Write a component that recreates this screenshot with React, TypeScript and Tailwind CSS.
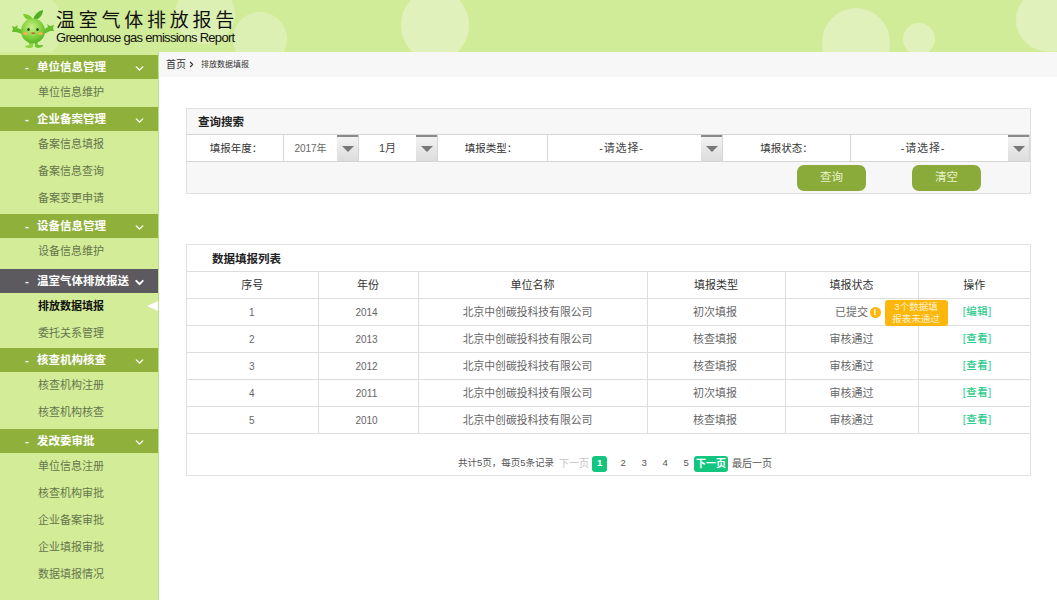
import { ChevronDown, ChevronRight } from "lucide-react";

const cjk = "font-['Liberation_Sans','Noto_Sans_CJK_SC',sans-serif]";

const groups = [
  { title: "单位信息管理", items: ["单位信息维护"], pb: "pb-[1px]" },
  { title: "企业备案管理", items: ["备案信息填报", "备案信息查询", "备案变更申请"], pb: "pb-[2px]" },
  { title: "设备信息管理", items: ["设备信息维护"], pb: "pb-[4px]" },
  { title: "温室气体排放报送", items: ["排放数据填报", "委托关系管理"], pb: "pb-[1px]", active: true },
  { title: "核查机构核查", items: ["核查机构注册", "核查机构核查"], pb: "pb-[3px]" },
  { title: "发改委审批", items: ["单位信息注册", "核查机构审批", "企业备案审批", "企业填报审批", "数据填报情况"], pb: "pb-[4px]" },
];

const rows = [
  ["1", "2014", "初次填报", "已提交", "[编辑]"],
  ["2", "2013", "核查填报", "审核通过", "[查看]"],
  ["3", "2012", "核查填报", "审核通过", "[查看]"],
  ["4", "2011", "初次填报", "审核通过", "[查看]"],
  ["5", "2010", "核查填报", "审核通过", "[查看]"],
];

function Mascot() {
  return (
    <svg width="46" height="40" viewBox="0 0 46 40" className="shrink-0">
      <defs>
        <radialGradient id="body" cx="45%" cy="35%" r="70%">
          <stop offset="0%" stopColor="#c8f08a" />
          <stop offset="60%" stopColor="#7fd038" />
          <stop offset="100%" stopColor="#4fae22" />
        </radialGradient>
      </defs>
      <path d="M24 11 C23 7 19 5 14 5 C15 9 19 12 24 11Z" fill="#7ccb2f" />
      <path d="M24 11 C25 6 29 2 34 1 C34 6 30 11 24 11Z" fill="#4fae22" />
      <path d="M14 21 L8 19 L9 16 L6 18 L3 17 L4 20 L3 23 L7 23 L13 25Z" fill="#67bf2c" />
      <path d="M34 21 L39 18 L38 15 L41 17 L45 16 L44 19 L45 22 L41 22 L35 25Z" fill="#67bf2c" />
      <path d="M20 32 L20 36 L16 37 Q16 39 22 39 L24 38 L24 33Z" fill="#8ed63f" />
      <path d="M28 32 L29 36 L34 36 Q35 38 29 39 L26 38 L26 33Z" fill="#6fc52f" />
      <ellipse cx="24" cy="22" rx="12" ry="12.5" fill="url(#body)" />
      <ellipse cx="19.5" cy="20.5" rx="1.2" ry="1.6" fill="#23400f" />
      <ellipse cx="28.5" cy="20.5" rx="1.2" ry="1.6" fill="#23400f" />
      <ellipse cx="16.5" cy="24.5" rx="2.5" ry="1.6" fill="#f5b04f" />
      <ellipse cx="31.5" cy="24.5" rx="2.5" ry="1.6" fill="#f5b04f" />
      <path d="M22 23.5 Q24 26.5 26.5 23.5Z" fill="#c9501e" />
    </svg>
  );
}

function Select({ w, value, extra }: { w: string; value: string; extra: string }) {
  return (
    <div className={`${w} flex h-full items-stretch border-r border-[#d5d5d5]`}>
      <div className={`flex-1 flex items-center justify-center pt-[1px] ${extra}`}>{value}</div>
      <div className="w-[21px] border-t-2 border-[#8a8a8a] bg-gradient-to-b from-[#f2f2f2] to-[#dcdcdc] flex items-center justify-center">
        <span className="block w-0 h-0 border-x-[6px] border-x-transparent border-t-[6px] border-t-[#777]" />
      </div>
    </div>
  );
}

function Label({ w, text, extra }: { w: string; text: string; extra?: string }) {
  return <div className={`${w} flex h-full items-center justify-center pt-[1px] border-r border-[#d5d5d5] text-[10.5px] text-[#333] ${extra ?? ""}`}>{text}</div>;
}

export default function App() {
  return (
    <div className={`${cjk} w-[1057px] h-[600px] overflow-hidden bg-white flex flex-col`}>
      <header className="relative h-[52px] shrink-0 overflow-hidden bg-[#d1ec98] flex items-start pl-[9px] pt-[9px]">
        <svg className="absolute inset-0" width="1057" height="52" viewBox="0 0 1057 52">
          <ellipse cx="20" cy="26" rx="44" ry="38" fill="#d9f0ab" />
          <ellipse cx="205" cy="14" rx="30" ry="30" fill="#ddf0b4" />
          <ellipse cx="260" cy="39" rx="27" ry="27" fill="#ddf0b4" />
          <ellipse cx="435" cy="25" rx="34" ry="36" fill="#e1f1bb" />
          <ellipse cx="856" cy="43" rx="34" ry="35" fill="#e1f1bb" />
          <ellipse cx="919" cy="39" rx="16" ry="16" fill="#e1f1bb" />
          <ellipse cx="1050" cy="20" rx="34" ry="32" fill="#e1f1bb" />
        </svg>
        <div className="relative flex items-start">
          <Mascot />
          <div className="ml-[1px]">
            <div className="pt-[1px] text-[19px] leading-[22px] tracking-[3.75px] text-[#111] whitespace-nowrap">温室气体排放报告</div>
            <div className="text-[13px] leading-[12px] tracking-[-0.7px] text-[#111] whitespace-nowrap">Greenhouse gas emissions Report</div>
          </div>
        </div>
      </header>

      <div className="flex flex-1 min-h-0">
        <aside className="w-[159px] shrink-0 bg-[#d2ec97] border-r border-[#bfe08a] pt-[3px]">
          {groups.map((g) => (
            <div key={g.title}>
              <div className={`h-[24px] flex items-center pt-[2px] text-white text-[11.5px] font-bold ${g.active ? "bg-[#5c5a5e]" : "bg-[#8fb13c]"}`}>
                <span className="ml-[25px] w-[12px]">-</span>
                <span className="flex-1 whitespace-nowrap">{g.title}</span>
                <ChevronDown size={13} strokeWidth={g.active ? 3.5 : 2.5} className="mr-[12px] shrink-0" />
              </div>
              <ul className={g.pb}>
                {g.items.map((it) => {
                  const on = it === "排放数据填报";
                  return (
                    <li key={it} className={`relative h-[27px] flex items-center pl-[38px] text-[11px] ${on ? "font-bold text-[#111]" : "text-[#66754d]"}`}>
                      {it}
                      {on && <span className="absolute right-0 top-[8px] w-0 h-0 border-y-[5px] border-y-transparent border-r-[11px] border-r-white" />}
                    </li>
                  );
                })}
              </ul>
            </div>
          ))}
        </aside>

        <main className="flex-1 min-w-0">
          <div className="h-[25px] bg-[#f7f7f7] flex items-center pl-[7px] text-[#333]">
            <span className="text-[10px]">首页</span>
            <ChevronRight size={9} strokeWidth={3} className="ml-[1px] mr-[5px]" />
            <span className="text-[8px]">排放数据填报</span>
          </div>

          <div className="ml-[27px] w-[845px]">
            <section className="mt-[31px] h-[86px] border border-[#e0e0e0] bg-[#f7f7f7]">
              <div className="h-[25px] flex items-center pt-[2px] pl-[11px] text-[11.5px] font-bold text-[#222]">查询搜索</div>
              <div className="h-[28px] bg-white border-y border-[#d5d5d5] flex items-center">
                <Label w="w-[97px]" text="填报年度：" extra="pl-[2px]" />
                <Select w="w-[75px]" value="2017年" extra="text-[10px] text-[#666]" />
                <Select w="w-[79px]" value="1月" extra="text-[11px] text-[#444]" />
                <Label w="w-[110px]" text="填报类型：" extra="pr-[3px]" />
                <Select w="w-[175px]" value="-请选择-" extra="text-[11px] text-[#444] tracking-[0.8px] pr-[6px]" />
                <Label w="w-[128px]" text="填报状态：" />
                <div className="flex-1 h-full flex">
                  <Select w="w-full" value="-请选择-" extra="text-[11px] text-[#444] tracking-[0.8px] pr-[13px]" />
                </div>
              </div>
              <div className="flex justify-end gap-[46px] pr-[49px] pt-[3px]">
                <button className="w-[69px] h-[26px] rounded-[7px] bg-[#8aaa3a] text-[#e8f3c8] text-[11.5px]">查询</button>
                <button className="w-[69px] h-[26px] rounded-[7px] bg-[#8aaa3a] text-[#e8f3c8] text-[11.5px]">清空</button>
              </div>
            </section>

            <section className="mt-[50px] h-[232px] border border-[#e0e0e0]">
              <div className="h-[26px] flex items-center pt-[3px] pl-[25px] text-[11.5px] font-bold text-[#222]">数据填报列表</div>
              <table className="w-full table-fixed border-collapse text-center text-[11px]">
                <colgroup>
                  <col className="w-[131px]" />
                  <col className="w-[100px]" />
                  <col className="w-[229px]" />
                  <col className="w-[138px]" />
                  <col className="w-[133px]" />
                  <col />
                </colgroup>
                <thead>
                  <tr className="h-[27px] text-[#333] border-y border-[#ddd]">
                    {["序号", "年份", "单位名称", "填报类型", "填报状态", "操作"].map((h, i) => (
                      <th key={h} className={`font-normal pt-[1px] ${i < 5 ? "border-r border-[#ddd]" : ""}`}>{h}</th>
                    ))}
                  </tr>
                </thead>
                <tbody className="text-[#666]">
                  {rows.map((r, idx) => (
                    <tr key={r[0]} className="h-[27px] border-b border-[#ddd]">
                      <td className="border-r border-[#ddd] text-[10px] pr-[1px]">{r[0]}</td>
                      <td className="border-r border-[#ddd] text-[10px] pr-[3px]">{r[1]}</td>
                      <td className="border-r border-[#ddd] pr-[10px] text-[10.8px]">北京中创碳投科技有限公司</td>
                      <td className="border-r border-[#ddd] pr-[2px]">{r[2]}</td>
                      <td className="relative border-r border-[#ddd]">
                        {r[3]}
                        {idx === 0 && (
                          <>
                            <span className="absolute left-[84px] top-[8px] w-[11px] h-[11px] rounded-full bg-[#fdb60c] text-white text-[9px] leading-[11px] font-bold">!</span>
                            <span className="absolute left-[99px] top-[1px] z-10 w-[63px] h-[26px] rounded-[3px] bg-[#fdb60c] text-[#fff3cf] text-[9.5px] leading-[12px] pt-[1px]">3个数据填<br />报表未通过</span>
                          </>
                        )}
                      </td>
                      <td className="text-[10.5px] font-medium tracking-[0.5px] text-[#2ecb8e] pl-[6px]">{r[4]}</td>
                    </tr>
                  ))}
                </tbody>
              </table>
              <div className="h-[41px] flex items-center justify-center pt-[18px] pl-[13px] text-[9.5px] text-[#555] whitespace-nowrap">
                <span>共计5页，每页5条记录</span>
                <span className="ml-[5px] text-[10px] text-[#c4c4c4]">下一页</span>
                <span className="ml-[3px] w-[15px] h-[16px] rounded-[3px] bg-[#14c57f] text-white font-bold flex items-center justify-center">1</span>
                <span className="ml-[11px] w-[10px] text-center">2</span>
                <span className="ml-[11px] w-[10px] text-center">3</span>
                <span className="ml-[11px] w-[10px] text-center">4</span>
                <span className="ml-[11px] w-[10px] text-center">5</span>
                <span className="ml-[3px] w-[34px] h-[16px] rounded-[3px] bg-[#14c57f] text-white text-[10px] font-bold flex items-center justify-center">下一页</span>
                <span className="ml-[4px] text-[10px]">最后一页</span>
              </div>
            </section>
          </div>
        </main>
      </div>
    </div>
  );
}
